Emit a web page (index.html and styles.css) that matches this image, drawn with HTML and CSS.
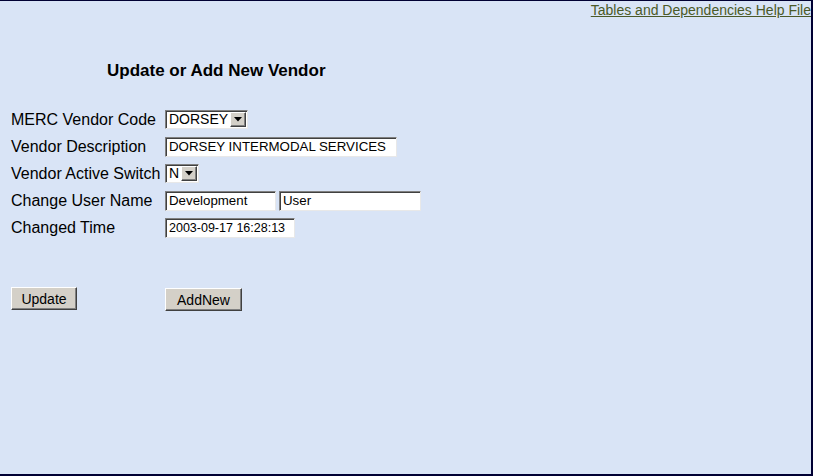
FILE: index.html
```html
<!DOCTYPE html>
<html>
<head>
<meta charset="utf-8">
<link rel="stylesheet" href="styles.css">
</head>
<body>
<div class="page">
  <div class="toplink"><a href="#">Tables and Dependencies Help File</a></div>
  <h1 class="title">Update or Add New Vendor</h1>
  <div class="form">
    <div class="row">
      <label class="lbl">MERC Vendor Code</label>
      <div class="select sel-code"><span class="val">DORSEY</span><span class="arrow"><svg width="8" height="5" viewBox="0 0 8 5"><path d="M0 0h8L4 4.5z" fill="#000"/></svg></span></div>
    </div>
    <div class="row">
      <label class="lbl">Vendor Description</label>
      <div class="input w-desc">DORSEY INTERMODAL SERVICES</div>
    </div>
    <div class="row">
      <label class="lbl">Vendor Active Switch</label>
      <div class="select sel-n"><span class="val">N</span><span class="arrow"><svg width="8" height="5" viewBox="0 0 8 5"><path d="M0 0h8L4 4.5z" fill="#000"/></svg></span></div>
    </div>
    <div class="row">
      <label class="lbl">Change User Name</label>
      <div class="pair">
        <div class="input w-first">Development</div>
        <div class="input w-last">User</div>
      </div>
    </div>
    <div class="row">
      <label class="lbl">Changed Time</label>
      <div class="input w-time small">2003-09-17 16:28:13</div>
    </div>
  </div>
  <div class="buttons">
    <div class="bcell"><button class="btn b-update">Update</button></div>
    <div class="bcell"><button class="btn b-add">AddNew</button></div>
  </div>
</div>
</body>
</html>
```
FILE: styles.css
```css
html, body {
  margin: 0;
  padding: 0;
}
body {
  width: 813px;
  height: 476px;
  box-sizing: border-box;
  background: #d9e4f6;
  border-top: 1px solid #000033;
  border-right: 2px solid #000033;
  border-bottom: 2px solid #000033;
  font-family: "Liberation Sans", Arial, sans-serif;
  color: #000;
  overflow: hidden;
}
.page {
  display: flex;
  flex-direction: column;
}
.toplink {
  text-align: right;
  font-size: 14px;
  line-height: 16px;
  padding-top: 1px;
  padding-right: 0;
}
.toplink a {
  color: #4b5a28;
  text-decoration: underline;
}
.title {
  margin: 43px 0 0 107px;
  font-size: 17px;
  line-height: 20px;
  font-weight: bold;
}
.form {
  margin-top: 25px;
  padding-left: 11px;
  display: flex;
  flex-direction: column;
}
.row {
  display: flex;
  align-items: center;
  height: 27px;
}
.row:last-child {
  height: 28px;
}
.lbl {
  width: 154px;
  font-size: 16px;
  line-height: 18px;
  white-space: nowrap;
}
.input {
  box-sizing: border-box;
  height: 20px;
  background: #fff;
  border-top: 1px solid #808080;
  border-left: 1px solid #808080;
  border-right: 1px solid #e8e8e8;
  border-bottom: 1px solid #e8e8e8;
  box-shadow: inset 1px 1px 0 #404040;
  font-size: 13.3px;
  line-height: 18px;
  padding-left: 3px;
  white-space: nowrap;
  overflow: hidden;
}
.input.small {
  font-size: 12.5px;
}
.w-desc { width: 232px; }
.w-first { width: 111px; }
.w-last { width: 142px; }
.w-time { width: 130px; }
.pair {
  display: flex;
  gap: 3px;
}
.select {
  box-sizing: border-box;
  height: 19px;
  background: #fff;
  border-top: 1px solid #808080;
  border-left: 1px solid #808080;
  border-right: 1px solid #e8e8e8;
  border-bottom: 1px solid #e8e8e8;
  box-shadow: inset 1px 1px 0 #404040;
  display: flex;
  align-items: center;
  justify-content: space-between;
  padding: 1px 1px 1px 3px;
  font-size: 14px;
}
.sel-code { width: 83px; }
.sel-n { width: 34px; }
.select .val {
  line-height: 15px;
}
.arrow {
  box-sizing: border-box;
  width: 16px;
  height: 15px;
  background: #d4d0c8;
  border-top: 1px solid #fff;
  border-left: 1px solid #fff;
  border-right: 1px solid #404040;
  border-bottom: 1px solid #404040;
  box-shadow: inset -1px -1px 0 #808080;
  display: flex;
  align-items: center;
  justify-content: center;
  padding-bottom: 1px;
}
.buttons {
  display: flex;
  margin-top: 45px;
  padding-left: 11px;
}
.bcell {
  width: 154px;
}
.btn {
  box-sizing: border-box;
  height: 23px;
  background: #d4d0c8;
  border-top: 1px solid #fff;
  border-left: 1px solid #fff;
  border-right: 1px solid #404040;
  border-bottom: 1px solid #404040;
  box-shadow: inset -1px -1px 0 #808080;
  font-family: "Liberation Sans", Arial, sans-serif;
  font-size: 14px;
  padding: 0;
  color: #000;
}
.b-update { width: 66px; }
.b-add { width: 77px; margin-top: 1px; }
```
